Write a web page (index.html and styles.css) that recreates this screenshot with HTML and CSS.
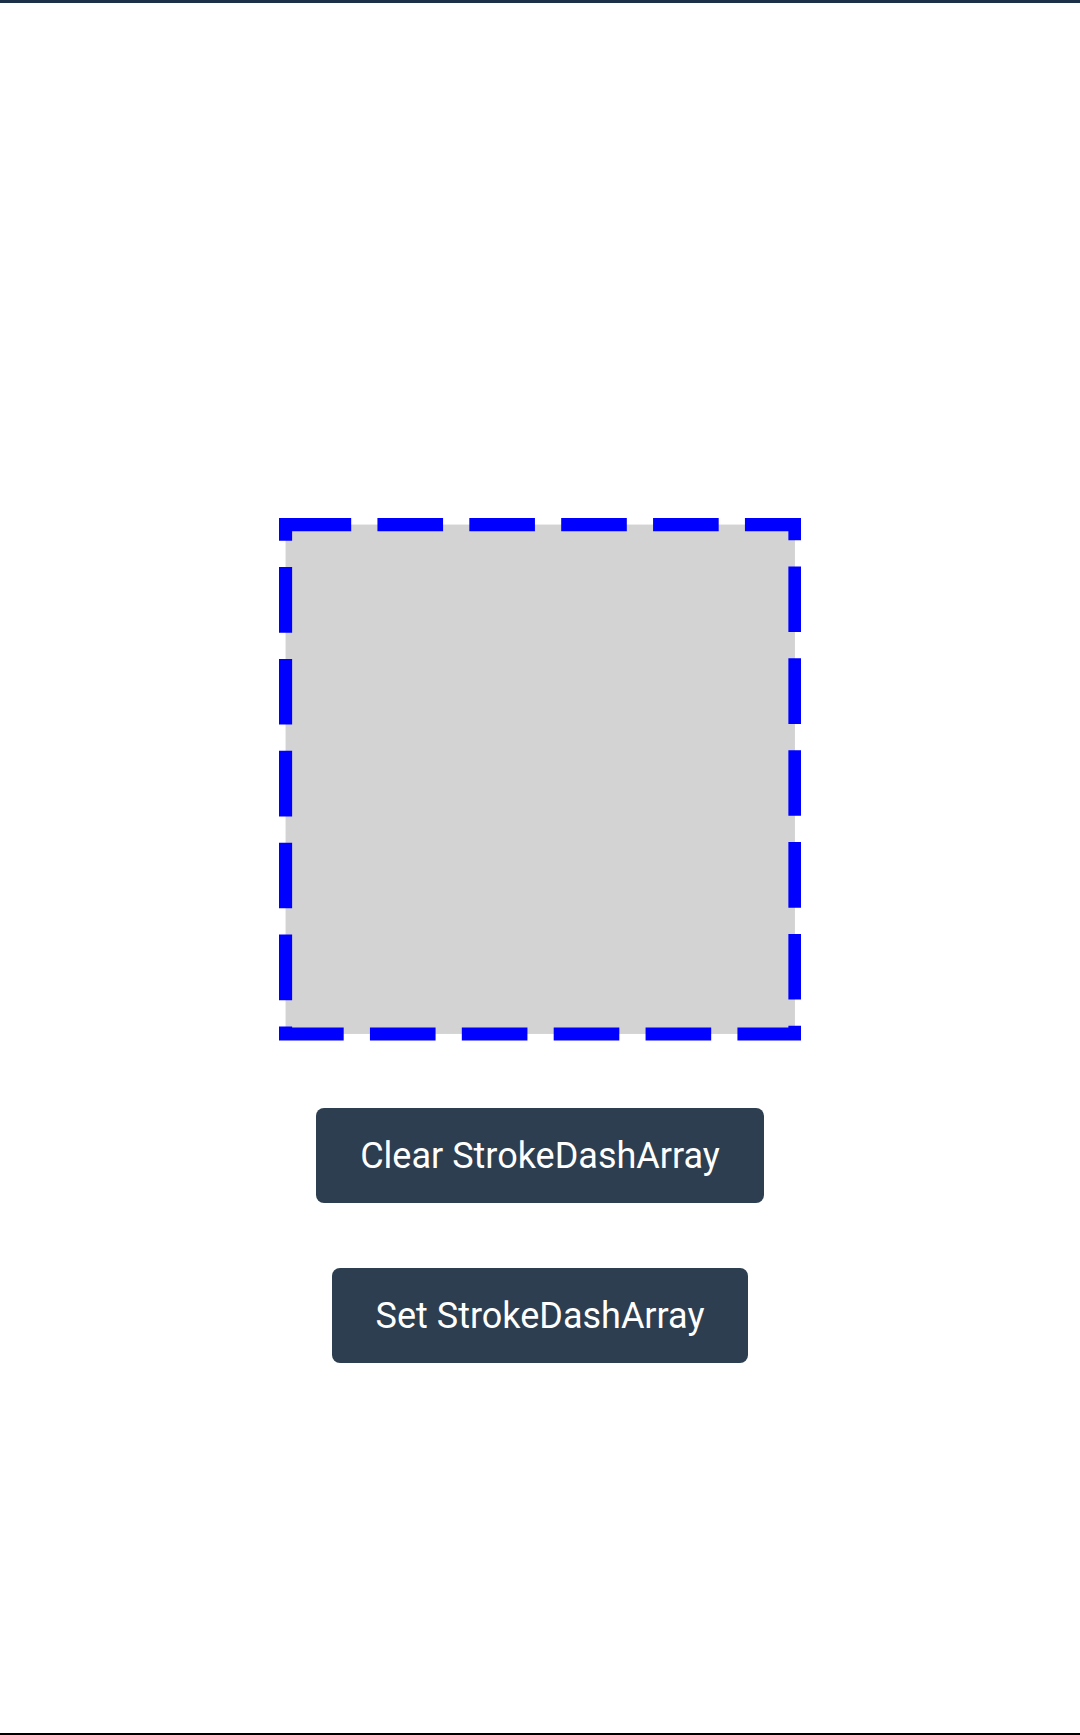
FILE: index.html
```html
<!DOCTYPE html>
<html>
<head>
<meta charset="utf-8">
<link rel="stylesheet" href="styles.css">
</head>
<body>
<div class="page">
  <div class="content">
    <svg class="shape" width="522.5" height="522.5" viewBox="0 0 522.5 522.5">
      <rect x="6.5625" y="6.5625" width="509.375" height="509.375" fill="#d3d3d3" stroke="#0000ff" stroke-width="13.125" stroke-dasharray="65.625 26.25" stroke-linejoin="miter"/>
    </svg>
    <button class="btn btn-clear">Clear StrokeDashArray</button>
    <button class="btn btn-set">Set StrokeDashArray</button>
  </div>
</div>
</body>
</html>
```

FILE: styles.css
```css
html, body {
  margin: 0;
  padding: 0;
  background: #ffffff;
}
.page {
  width: 1080px;
  height: 1735px;
  box-sizing: border-box;
  border-top: 3px solid #1c3048;
  border-bottom: 2px solid #000000;
  display: flex;
  flex-direction: column;
  align-items: center;
}
.content {
  padding-top: 515.3px;
  display: flex;
  flex-direction: column;
  align-items: center;
}
.shape {
  display: block;
}
.btn {
  display: block;
  box-sizing: border-box;
  height: 94.4px;
  padding: 3px 44px 0 44px;
  border: 0;
  outline: none;
  border-radius: 8px;
  background: #2c3e50;
  color: #ffffff;
  font-family: Roboto, "Noto Sans", sans-serif;
  font-size: 36px;
  line-height: 91.4px;
  white-space: nowrap;
  -webkit-appearance: none;
  appearance: none;
}
.btn-clear {
  margin-top: 67.6px;
}
.btn-set {
  margin-top: 65.6px;
}
```
